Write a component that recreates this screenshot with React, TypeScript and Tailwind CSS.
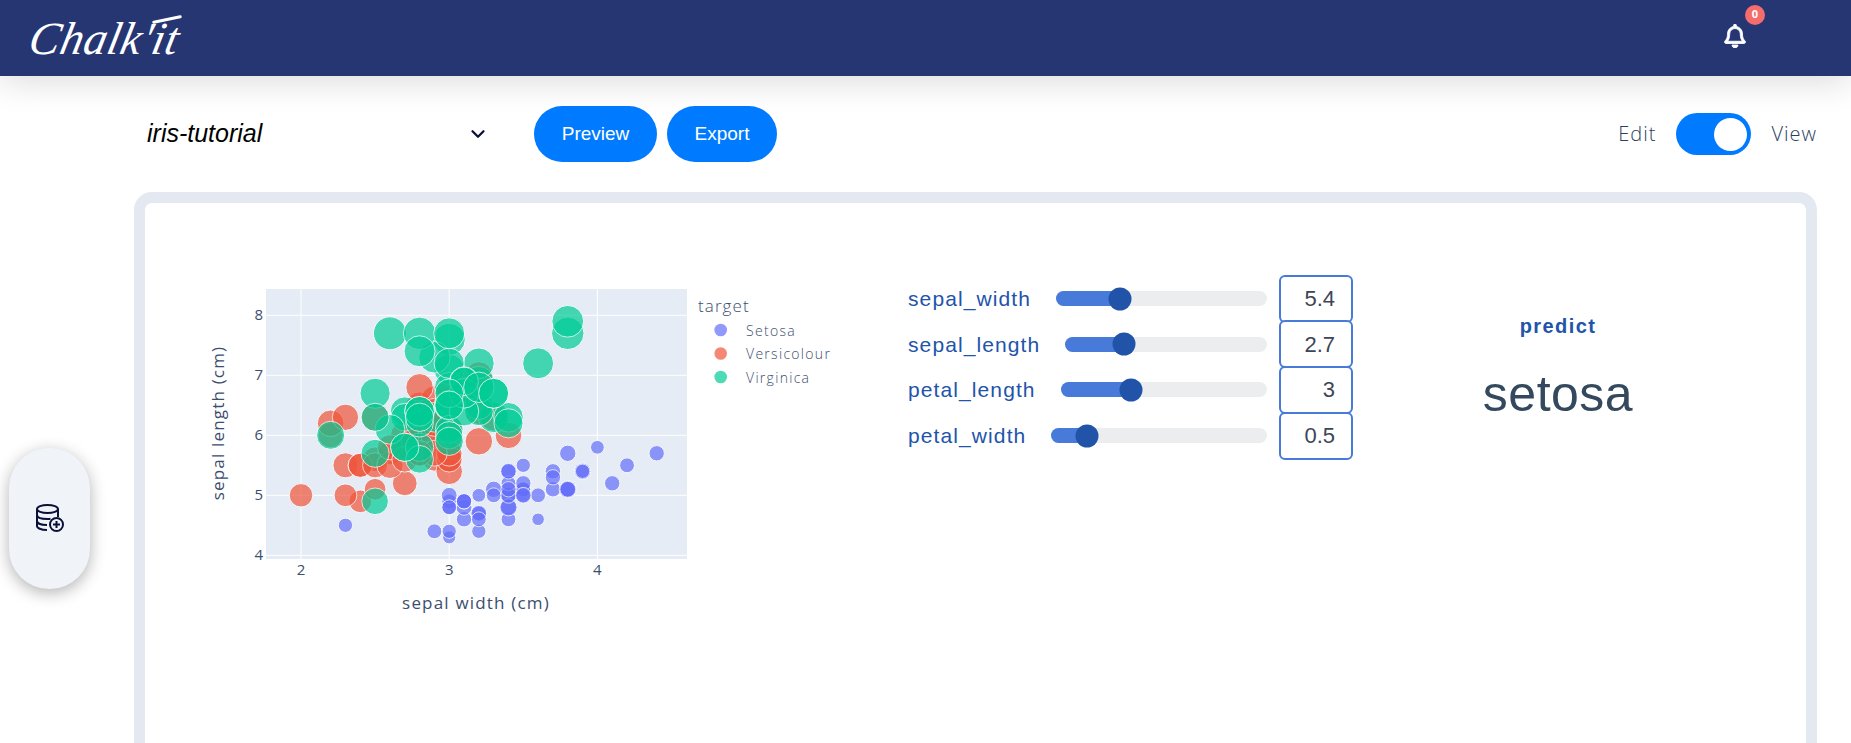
import { ChevronDown } from "lucide-react";
import { FaRegBell } from "react-icons/fa";

// [sepal length, sepal width, petal length]
const setosa = [[5.1,3.5,1.4],[4.9,3.0,1.4],[4.7,3.2,1.3],[4.6,3.1,1.5],[5.0,3.6,1.4],[5.4,3.9,1.7],[4.6,3.4,1.4],[5.0,3.4,1.5],[4.4,2.9,1.4],[4.9,3.1,1.5],[5.4,3.7,1.5],[4.8,3.4,1.6],[4.8,3.0,1.4],[4.3,3.0,1.1],[5.8,4.0,1.2],[5.7,4.4,1.5],[5.4,3.9,1.3],[5.1,3.5,1.4],[5.7,3.8,1.7],[5.1,3.8,1.5],[5.4,3.4,1.7],[5.1,3.7,1.5],[4.6,3.6,1.0],[5.1,3.3,1.7],[4.8,3.4,1.9],[5.0,3.0,1.6],[5.0,3.4,1.6],[5.2,3.5,1.5],[5.2,3.4,1.4],[4.7,3.2,1.6],[4.8,3.1,1.6],[5.4,3.4,1.5],[5.2,4.1,1.5],[5.5,4.2,1.4],[4.9,3.1,1.5],[5.0,3.2,1.2],[5.5,3.5,1.3],[4.9,3.1,1.5],[4.4,3.0,1.3],[5.1,3.4,1.5],[5.0,3.5,1.3],[4.5,2.3,1.3],[4.4,3.2,1.3],[5.0,3.5,1.6],[5.1,3.8,1.9],[4.8,3.0,1.4],[5.1,3.8,1.6],[4.6,3.2,1.4],[5.3,3.7,1.5],[5.0,3.3,1.4]];
const versicolour = [[7.0,3.2,4.7],[6.4,3.2,4.5],[6.9,3.1,4.9],[5.5,2.3,4.0],[6.5,2.8,4.6],[5.7,2.8,4.5],[6.3,3.3,4.7],[4.9,2.4,3.3],[6.6,2.9,4.6],[5.2,2.7,3.9],[5.0,2.0,3.5],[5.9,3.0,4.2],[6.0,2.2,4.0],[6.1,2.9,4.7],[5.6,2.9,3.6],[6.7,3.1,4.4],[5.6,3.0,4.5],[5.8,2.7,4.1],[6.2,2.2,4.5],[5.6,2.5,3.9],[5.9,3.2,4.8],[6.1,2.8,4.0],[6.3,2.5,4.9],[6.1,2.8,4.7],[6.4,2.9,4.3],[6.6,3.0,4.4],[6.8,2.8,4.8],[6.7,3.0,5.0],[6.0,2.9,4.5],[5.7,2.6,3.5],[5.5,2.4,3.8],[5.5,2.4,3.7],[5.8,2.7,3.9],[6.0,2.7,5.1],[5.4,3.0,4.5],[6.0,3.4,4.5],[6.7,3.1,4.7],[6.3,2.3,4.4],[5.6,3.0,4.1],[5.5,2.5,4.0],[5.5,2.6,4.4],[6.1,3.0,4.6],[5.8,2.6,4.0],[5.0,2.3,3.3],[5.6,2.7,4.2],[5.7,3.0,4.2],[5.7,2.9,4.2],[6.2,2.9,4.3],[5.1,2.5,3.0],[5.7,2.8,4.1]];
const virginica = [[6.3,3.3,6.0],[5.8,2.7,5.1],[7.1,3.0,5.9],[6.3,2.9,5.6],[6.5,3.0,5.8],[7.6,3.0,6.6],[4.9,2.5,4.5],[7.3,2.9,6.3],[6.7,2.5,5.8],[7.2,3.6,6.1],[6.5,3.2,5.1],[6.4,2.7,5.3],[6.8,3.0,5.5],[5.7,2.5,5.0],[5.8,2.8,5.1],[6.4,3.2,5.3],[6.5,3.0,5.5],[7.7,3.8,6.7],[7.7,2.6,6.9],[6.0,2.2,5.0],[6.9,3.2,5.7],[5.6,2.8,4.9],[7.7,2.8,6.7],[6.3,2.7,4.9],[6.7,3.3,5.7],[7.2,3.2,6.0],[6.2,2.8,4.8],[6.1,3.0,4.9],[6.4,2.8,5.6],[7.2,3.0,5.8],[7.4,2.8,6.1],[7.9,3.8,6.4],[6.4,2.8,5.6],[6.3,2.8,5.1],[6.1,2.6,5.6],[7.7,3.0,6.1],[6.3,3.4,5.6],[6.4,3.1,5.5],[6.0,3.0,4.8],[6.9,3.1,5.4],[6.7,3.1,5.6],[6.9,3.1,5.1],[5.8,2.7,5.1],[6.8,3.2,5.9],[6.7,3.3,5.7],[6.7,3.0,5.2],[6.3,2.5,5.0],[6.5,3.0,5.2],[6.2,3.4,5.4],[5.9,3.0,5.1]];

const series = [
  { name: "Setosa", color: "#636efa", points: setosa },
  { name: "Versicolour", color: "#EF553B", points: versicolour },
  { name: "Virginica", color: "#00cc96", points: virginica },
];

const px = (w: number) => 301 + (w - 2) * 148.2;
const py = (l: number) => 555.3 - (l - 4) * 60;

function IrisChart() {
  return (
    <svg viewBox="190 270 718 360" className="w-[718px] h-[360px] shrink-0 font-['Open_Sans',sans-serif]">
      <rect x={266} y={289} width={421} height={270} fill="#E5ECF6" />
      {[2, 3, 4].map((v) => (
        <line key={v} x1={px(v)} x2={px(v)} y1={289} y2={559} stroke="#fff" strokeWidth={1} />
      ))}
      {[4, 5, 6, 7, 8].map((v) => (
        <line key={v} x1={266} x2={687} y1={py(v)} y2={py(v)} stroke="#fff" strokeWidth={1} />
      ))}
      {series.map((s) =>
        s.points.map((p, i) => (
          <circle
            key={s.name + i}
            cx={px(p[1])}
            cy={py(p[0])}
            r={6.28 * Math.sqrt(p[2])}
            fill={s.color}
            stroke="#fff"
            strokeWidth={1}
            opacity={0.7}
          />
        ))
      )}
      <g fill="#3b4e6e" fontSize={15}>
        {[2, 3, 4].map((v) => (
          <text key={v} x={px(v)} y={575} textAnchor="middle">{v}</text>
        ))}
        {[4, 5, 6, 7, 8].map((v) => (
          <text key={v} x={263} y={py(v) + 5} textAnchor="end">{v}</text>
        ))}
      </g>
      <text x={476} y={609} textAnchor="middle" fill="#3b4e6e" fontSize={17} letterSpacing={1.18}>sepal width (cm)</text>
      <text transform="translate(224 423) rotate(-90)" textAnchor="middle" fill="#3b4e6e" fontSize={17} letterSpacing={1.18}>sepal length (cm)</text>
      <text x={698} y={312} fill="#3b4e6e" fontSize={17} fontWeight={300} letterSpacing={1.1}>target</text>
      {series.map((s, i) => (
        <g key={s.name}>
          <circle cx={720.7} cy={330 + i * 23.5} r={6.3} fill={s.color} opacity={0.7} />
          <text x={746} y={335.5 + i * 23.5} fill="#3b4e6e" fontSize={14} fontWeight={300} letterSpacing={1.3}>{s.name}</text>
        </g>
      ))}
    </svg>
  );
}

const sliders = [
  { label: "sepal_width", value: "5.4", pos: 0.305 },
  { label: "sepal_length", value: "2.7", pos: 0.29 },
  { label: "petal_length", value: "3", pos: 0.34 },
  { label: "petal_width", value: "0.5", pos: 0.167 },
];

function SliderRow({ label, value, pos }: { label: string; value: string; pos: number }) {
  return (
    <div className="flex items-center h-[45.6px] gap-[12px]">
      <span className="text-[21px] tracking-[1.1px] text-[#2154aa] mr-[13px]">{label}</span>
      <div className="relative flex-1 h-[15px] rounded-full bg-[#ecedef]">
        <div className="h-full rounded-full bg-[#477ad9]" style={{ width: `${pos * 100}%` }} />
        <div
          className="absolute top-1/2 size-[23px] -translate-x-1/2 -translate-y-1/2 rounded-full bg-[#2154a9]"
          style={{ left: `${pos * 100}%` }}
        />
      </div>
      <div className="relative flex items-center justify-end w-[74px] h-[48px] shrink-0 pr-[16px] rounded-[6px] border-2 border-[#477ad9] bg-white text-[22px] text-[#3c4658]">
        {value}
      </div>
    </div>
  );
}

export default function App() {
  return (
    <div className="relative h-screen overflow-hidden bg-white font-['Liberation_Sans',sans-serif]">
      <header className="relative z-10 flex items-center justify-between h-[76px] bg-[#253673] shadow-[0_6px_34px_rgba(0,0,0,0.14)]">
        <div className="relative ml-[30px] mt-[2px]">
          <span className="block -skew-x-12 font-['Liberation_Serif',serif] italic text-[46px] leading-none text-white tracking-[0.5px]">
            Chalk'it
          </span>
          {/* crossbar of the t in the logo */}
          <div className="absolute left-[122px] top-[2px] w-[30px] h-[3px] -rotate-12 rounded-full bg-white" />
        </div>
        <div className="relative mr-[104px] mt-[-5px] text-white">
          <FaRegBell size={24} stroke="currentColor" strokeWidth={18} />
          <span className="absolute -top-[19px] left-[22px] flex items-center justify-center size-[20px] rounded-full bg-[#f56c6c] text-[11px] font-bold font-['Open_Sans',sans-serif]">
            0
          </span>
        </div>
      </header>

      <div className="flex items-center h-[116px] pl-[147px] pr-[34px]">
        <div className="flex items-center justify-between w-[342px] mr-[45px]">
          <span className="italic text-[25px] text-black">iris-tutorial</span>
          <ChevronDown size={22} strokeWidth={2.5} className="text-[#0b1038]" />
        </div>
        <button className="w-[123px] h-[56px] rounded-full bg-[#007bff] text-white text-[19px]">Preview</button>
        <button className="w-[110px] h-[56px] ml-[10px] rounded-full bg-[#007bff] text-white text-[19px]">Export</button>
        <div className="ml-auto flex items-center font-['Open_Sans',sans-serif] font-light text-[20px] tracking-[1px] text-[#2a3f5f]">
          <span>Edit</span>
          <div className="flex items-center justify-end w-[75px] h-[42px] mx-[20px] pr-[4px] rounded-full bg-[#007bff]">
            <div className="size-[33px] rounded-full bg-white" />
          </div>
          <span>View</span>
        </div>
      </div>

      <main className="flex items-start ml-[134px] mr-[34px] h-[600px] pl-[45px] pt-[67px] rounded-[18px] border-[11px] border-[#e3e8f1]">
        <IrisChart />
        <div className="w-[445px] shrink-0 mt-[6px] flex flex-col">
          {sliders.map((s) => (
            <SliderRow key={s.label} {...s} />
          ))}
        </div>
        <div className="w-[410px] shrink-0 mt-[41px] flex flex-col items-center">
          <span className="text-[20px] font-bold tracking-[1.4px] text-[#2154aa]">predict</span>
          <span className="mt-[16px] text-[50px] tracking-[0.5px] text-[#34495e]">setosa</span>
        </div>
      </main>

      <aside className="absolute left-[9px] top-[448px] flex items-center justify-center pb-[2px] w-[81px] h-[141px] rounded-[40px] bg-[#f0f3f7] shadow-[0_4px_16px_rgba(0,0,0,0.3)]">
        <svg viewBox="0 0 28 28" className="size-[28px]" fill="none" stroke="#0b1038" strokeWidth={2}>
          <ellipse cx="11.5" cy="5" rx="10.5" ry="4" />
          <path d="M1 5v17c0 2 4 4 10 4" />
          <path d="M22 5v8" />
          <path d="M1 11c0 2.5 4.5 4 10.5 4 1 0 2 0 3-.2" />
          <path d="M1 17c0 2.5 4.5 4 10 4" />
          <circle cx="20.5" cy="20.5" r="6.5" fill="#f0f3f7" />
          <path d="M20.5 17v7M17 20.5h7" />
        </svg>
      </aside>
    </div>
  );
}
